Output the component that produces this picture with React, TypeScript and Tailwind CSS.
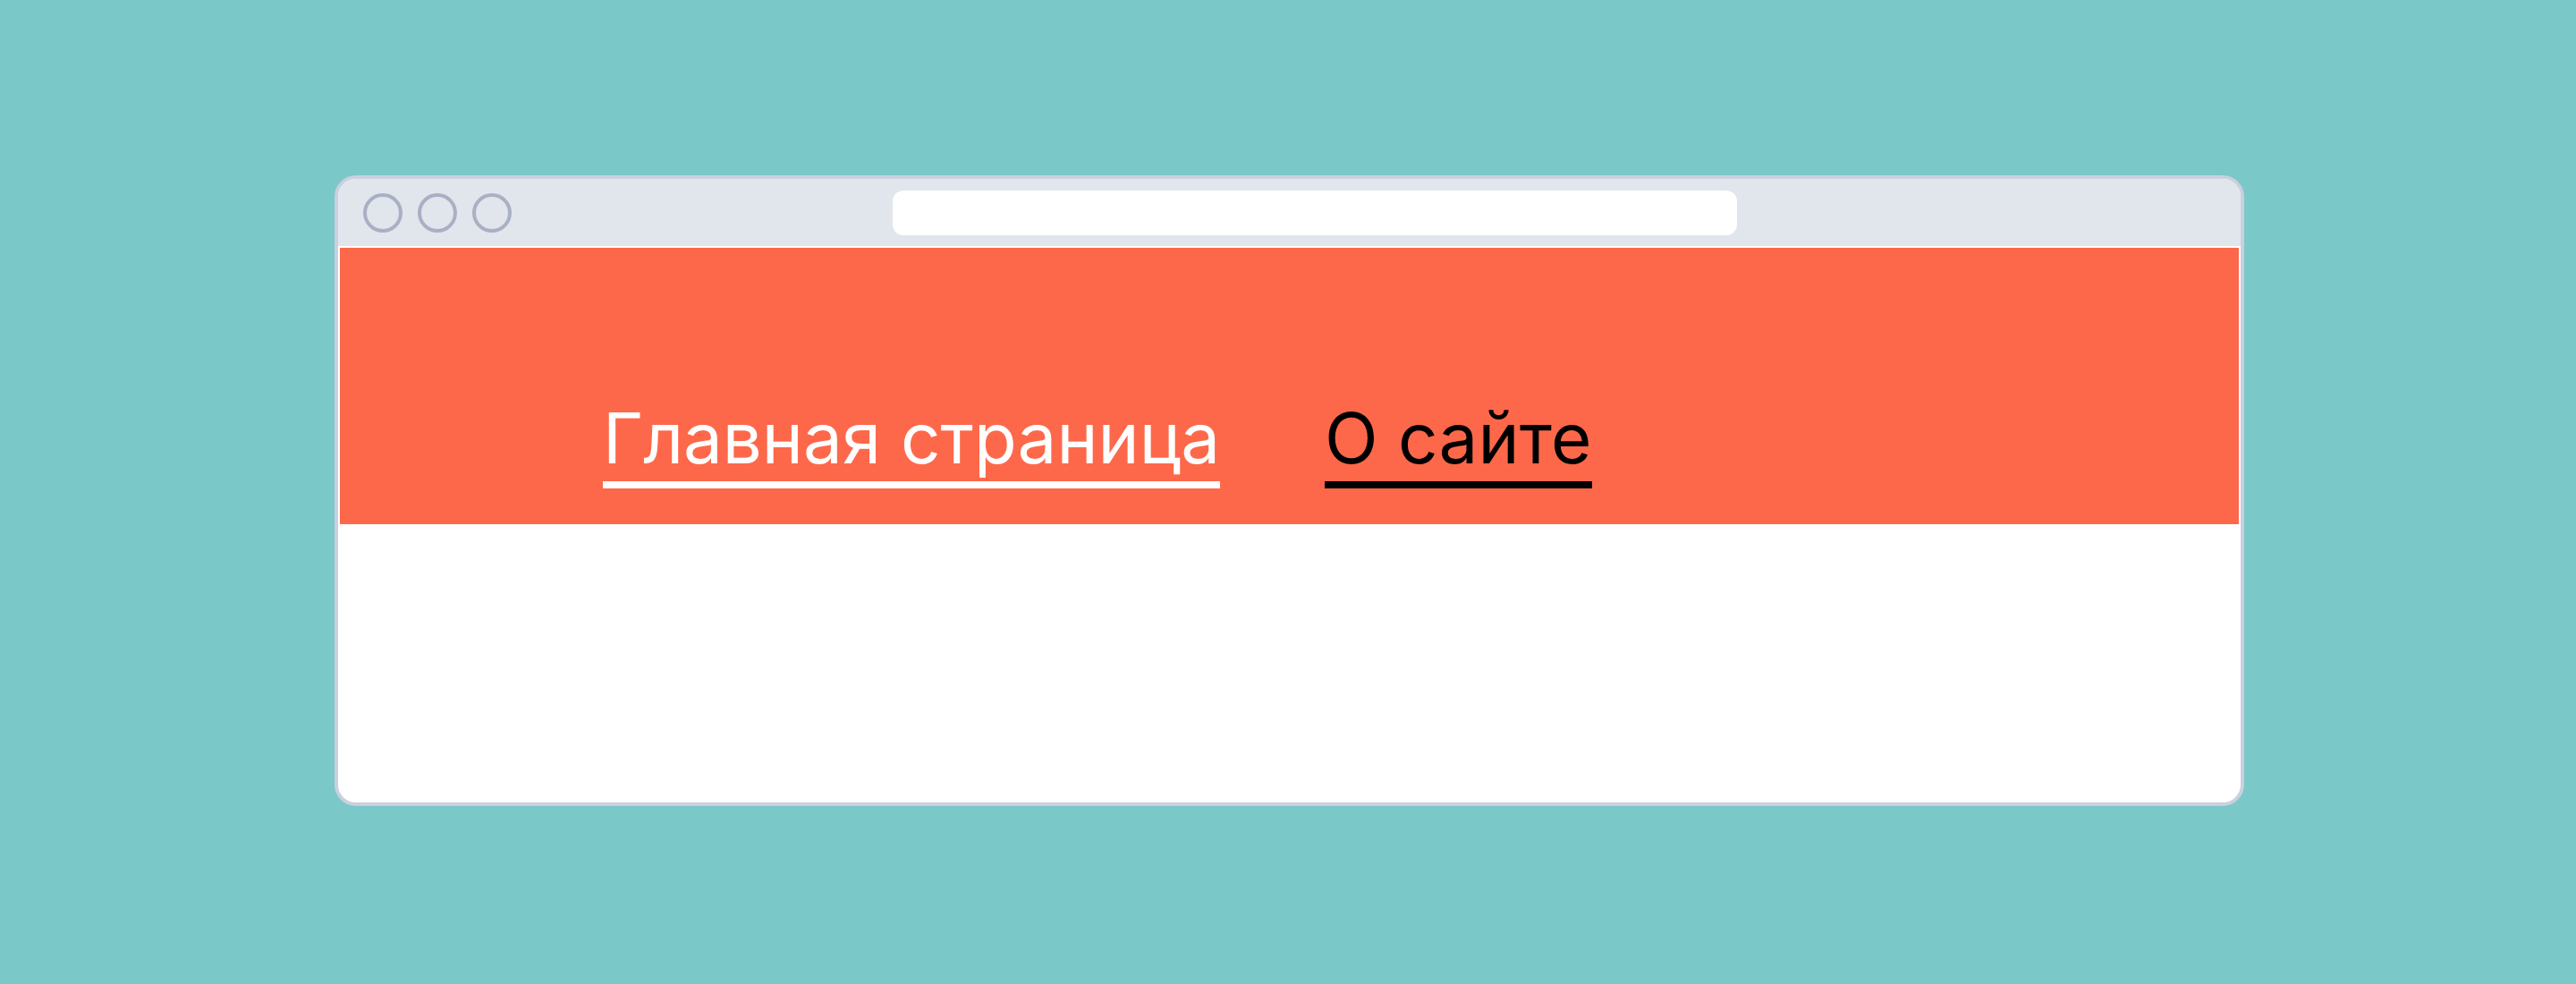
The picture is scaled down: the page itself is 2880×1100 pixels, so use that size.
export default function App() {
  return (
    <div className="w-full h-[1100px] bg-[#7bc8c8] pt-[196px] pl-[374px]" style={{ fontFamily: "Inter, 'Noto Sans', sans-serif" }}>
      <div className="w-[2135px] h-[705px] bg-white border-4 border-[#cad0dd] rounded-[24px] overflow-hidden">
        {/* title bar */}
        <div className="h-[75px] bg-[#e1e5ec] flex items-center pl-[28px]">
          <div className="flex gap-[17px]">
            <span className="w-[44px] h-[44px] rounded-full border-4 border-[#a9b0c4]" />
            <span className="w-[44px] h-[44px] rounded-full border-4 border-[#a9b0c4]" />
            <span className="w-[44px] h-[44px] rounded-full border-4 border-[#a9b0c4]" />
          </div>
          <div className="ml-[426px] w-[944px] h-[50px] rounded-[12px] bg-white" />
        </div>

        <div className="px-[2px] pt-[2px]">
          <nav className="h-[309px] bg-[#fe684a] pt-[174px] pl-[294px] flex items-start gap-[117px]">
            <a className="text-[78px] leading-none text-white pb-[9px] border-b-[8px] border-white">
              Главная страница
            </a>
            <a className="text-[78px] leading-none text-black pb-[9px] border-b-[8px] border-black tracking-[0.2px]">
              О сайте
            </a>
          </nav>
        </div>
      </div>
    </div>
  );
}
